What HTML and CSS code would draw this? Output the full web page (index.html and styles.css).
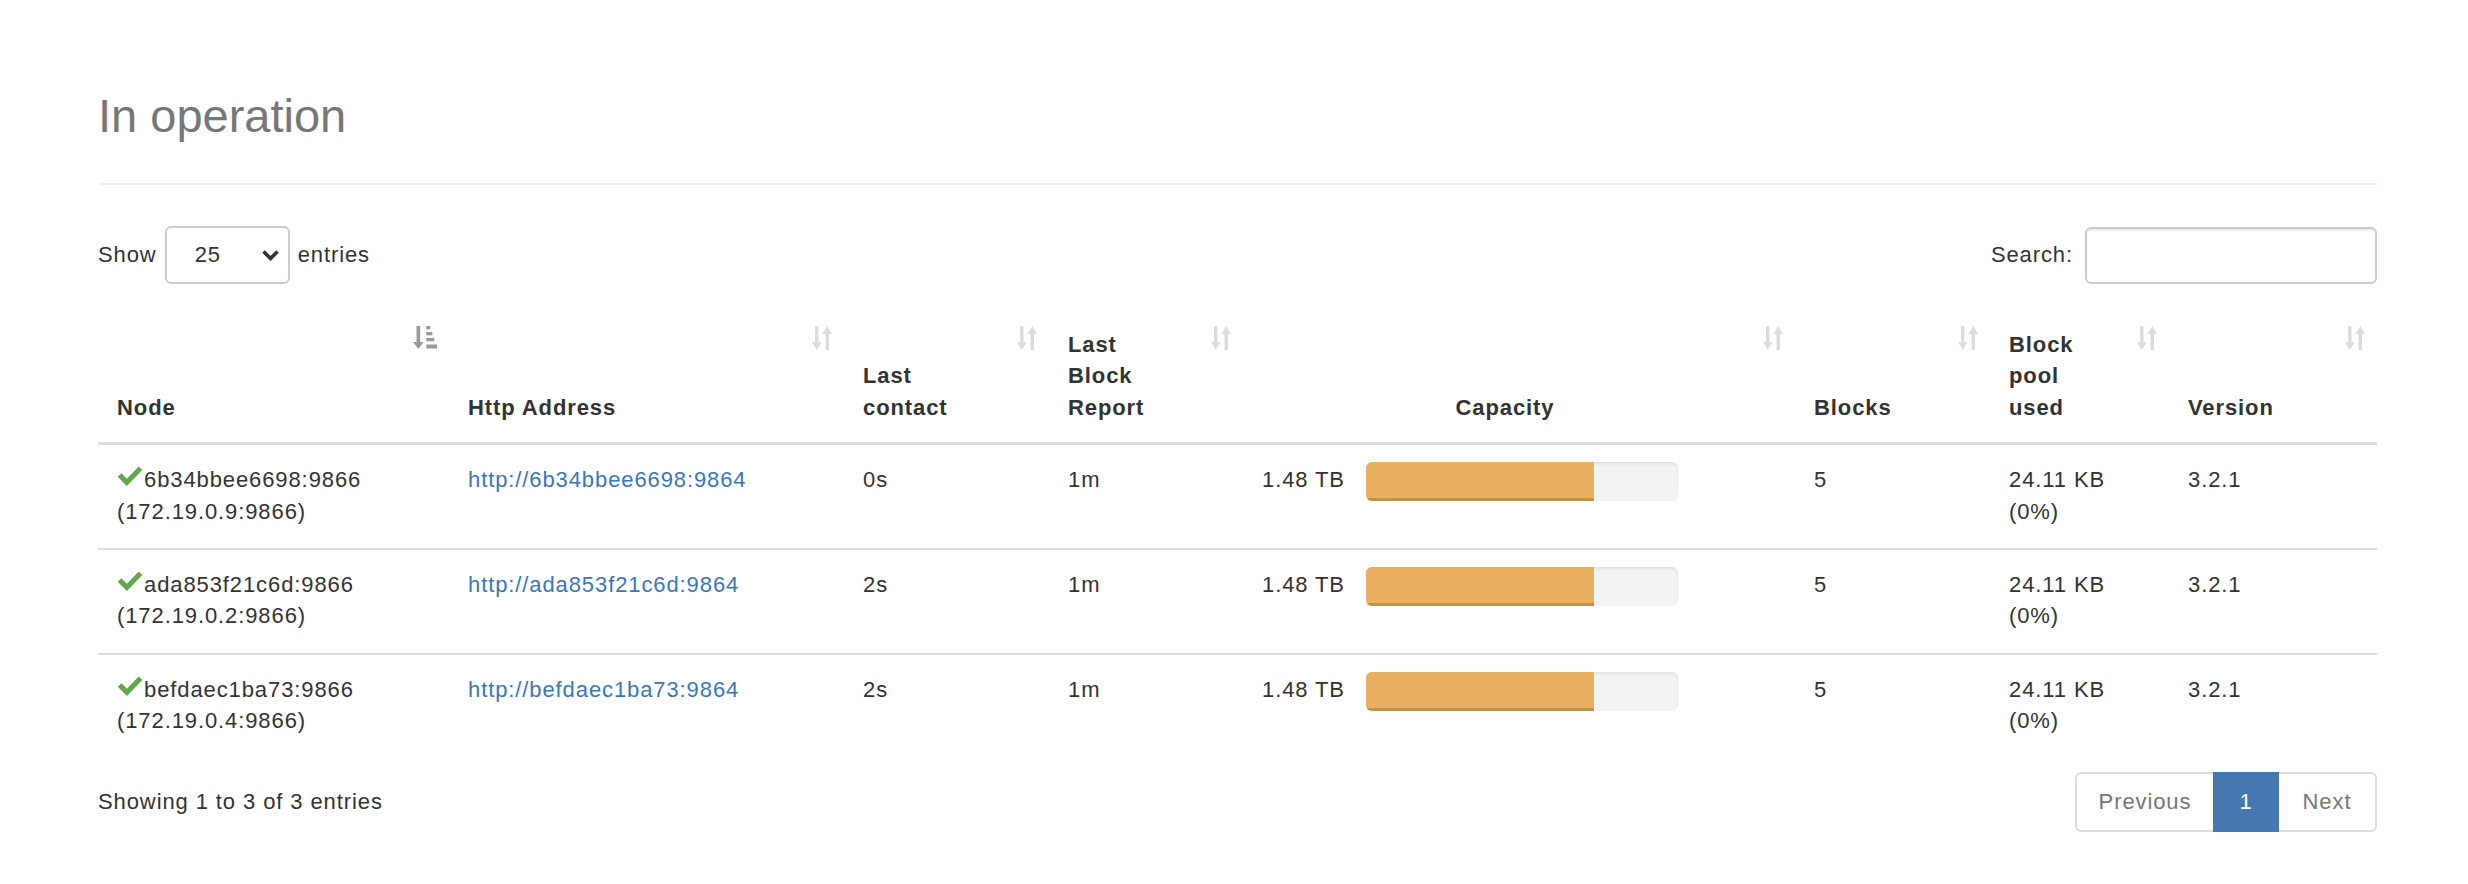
FILE: index.html
```html
<!DOCTYPE html>
<html lang="en">
<head>
<meta charset="utf-8">
<title>In operation</title>
<link rel="stylesheet" href="styles.css">
</head>
<body>
<div class="page">
  <div class="page-header"><h2>In operation</h2></div>

  <div class="controls">
    <label class="length">Show
      <span class="select"><span>25</span>
        <svg class="chevron" width="17" height="12" viewBox="0 0 17 12"><path d="M1.5 2.5 L8.5 9.5 L15.5 2.5" fill="none" stroke="#333" stroke-width="3.6"/></svg>
      </span>
      entries</label>
    <label class="search">Search: <input type="search"></label>
  </div>

  <table class="dt">
    <colgroup>
      <col class="c-node"><col class="c-http"><col class="c-contact"><col class="c-report"><col class="c-cap"><col class="c-blocks"><col class="c-pool"><col class="c-ver">
    </colgroup>
    <thead>
      <tr>
        <th>Node<svg class="sort-icon asc" width="24" height="23" viewBox="0 0 24 23"><rect x="3.5" y="0" width="3.7" height="17"/><polygon points="0,16 10.7,16 5.35,23"/><rect x="13.3" y="0" width="4" height="3.3"/><rect x="13.3" y="6" width="6" height="3.3"/><rect x="13.3" y="12" width="8" height="3.3"/><rect x="13.3" y="18.5" width="10.7" height="4"/></svg></th>
        <th>Http Address<svg class="sort-icon" width="20" height="24" viewBox="0 0 20 24"><rect x="3" y="0" width="3.5" height="17"/><polygon points="0,16 9.5,16 4.75,24"/><polygon points="10.5,8 20,8 15.25,0"/><rect x="13.5" y="7" width="3.5" height="17"/></svg></th>
        <th>Last<br>contact<svg class="sort-icon" width="20" height="24" viewBox="0 0 20 24"><rect x="3" y="0" width="3.5" height="17"/><polygon points="0,16 9.5,16 4.75,24"/><polygon points="10.5,8 20,8 15.25,0"/><rect x="13.5" y="7" width="3.5" height="17"/></svg></th>
        <th>Last<br>Block<br>Report<svg class="sort-icon" width="20" height="24" viewBox="0 0 20 24"><rect x="3" y="0" width="3.5" height="17"/><polygon points="0,16 9.5,16 4.75,24"/><polygon points="10.5,8 20,8 15.25,0"/><rect x="13.5" y="7" width="3.5" height="17"/></svg></th>
        <th class="center">Capacity<svg class="sort-icon" width="20" height="24" viewBox="0 0 20 24"><rect x="3" y="0" width="3.5" height="17"/><polygon points="0,16 9.5,16 4.75,24"/><polygon points="10.5,8 20,8 15.25,0"/><rect x="13.5" y="7" width="3.5" height="17"/></svg></th>
        <th>Blocks<svg class="sort-icon" width="20" height="24" viewBox="0 0 20 24"><rect x="3" y="0" width="3.5" height="17"/><polygon points="0,16 9.5,16 4.75,24"/><polygon points="10.5,8 20,8 15.25,0"/><rect x="13.5" y="7" width="3.5" height="17"/></svg></th>
        <th>Block<br>pool<br>used<svg class="sort-icon" width="20" height="24" viewBox="0 0 20 24"><rect x="3" y="0" width="3.5" height="17"/><polygon points="0,16 9.5,16 4.75,24"/><polygon points="10.5,8 20,8 15.25,0"/><rect x="13.5" y="7" width="3.5" height="17"/></svg></th>
        <th>Version<svg class="sort-icon" width="20" height="24" viewBox="0 0 20 24"><rect x="3" y="0" width="3.5" height="17"/><polygon points="0,16 9.5,16 4.75,24"/><polygon points="10.5,8 20,8 15.25,0"/><rect x="13.5" y="7" width="3.5" height="17"/></svg></th>
      </tr>
    </thead>
    <tbody>
      <tr>
        <td><svg class="ok" width="26" height="23" viewBox="0 0 24 22"><path d="M0.3 12.3 L3.8 8.8 L9 14 L20.3 2.3 L23.8 5.8 L9 21 Z"/></svg>6b34bbee6698:9866<br>(172.19.0.9:9866)</td>
        <td><a href="#">http://6b34bbee6698:9864</a></td>
        <td>0s</td>
        <td>1m</td>
        <td><div class="cap"><span>1.48 TB</span><div class="progress"><div class="progress-bar" style="width:73%"></div></div></div></td>
        <td>5</td>
        <td>24.11 KB<br>(0%)</td>
        <td>3.2.1</td>
      </tr>
      <tr>
        <td><svg class="ok" width="26" height="23" viewBox="0 0 24 22"><path d="M0.3 12.3 L3.8 8.8 L9 14 L20.3 2.3 L23.8 5.8 L9 21 Z"/></svg>ada853f21c6d:9866<br>(172.19.0.2:9866)</td>
        <td><a href="#">http://ada853f21c6d:9864</a></td>
        <td>2s</td>
        <td>1m</td>
        <td><div class="cap"><span>1.48 TB</span><div class="progress"><div class="progress-bar" style="width:73%"></div></div></div></td>
        <td>5</td>
        <td>24.11 KB<br>(0%)</td>
        <td>3.2.1</td>
      </tr>
      <tr>
        <td><svg class="ok" width="26" height="23" viewBox="0 0 24 22"><path d="M0.3 12.3 L3.8 8.8 L9 14 L20.3 2.3 L23.8 5.8 L9 21 Z"/></svg>befdaec1ba73:9866<br>(172.19.0.4:9866)</td>
        <td><a href="#">http://befdaec1ba73:9864</a></td>
        <td>2s</td>
        <td>1m</td>
        <td><div class="cap"><span>1.48 TB</span><div class="progress"><div class="progress-bar" style="width:73%"></div></div></div></td>
        <td>5</td>
        <td>24.11 KB<br>(0%)</td>
        <td>3.2.1</td>
      </tr>
    </tbody>
  </table>

  <div class="footer">
    <div class="info">Showing 1 to 3 of 3 entries</div>
    <ul class="pagination">
      <li class="prev">Previous</li>
      <li class="active">1</li>
      <li class="next">Next</li>
    </ul>
  </div>
</div>
</body>
</html>
```

FILE: styles.css
```css
* { box-sizing: border-box; }

body {
  margin: 0;
  background: #fff;
  color: #333;
  font-family: "Liberation Sans", Arial, Helvetica, sans-serif;
  font-size: 22px;
  line-height: 31.4px;
  letter-spacing: 0.9px;
}

.page {
  padding: 0 91px 0 98px;
}

.page-header {
  padding: 90px 0 41px;
  border-bottom: 2px solid #eee;
}

.page-header h2 {
  margin: 0;
  font-size: 47px;
  line-height: 52px;
  font-weight: 400;
  letter-spacing: 0;
  color: #777;
}

.controls {
  margin-top: 41px;
  height: 58px;
  display: flex;
  justify-content: space-between;
  align-items: center;
}

.length {
  display: flex;
  align-items: center;
  gap: 8px;
}

.select {
  width: 125px;
  height: 58px;
  display: flex;
  align-items: center;
  justify-content: space-between;
  padding: 0 9px 0 28px;
  border: 2px solid #ccc;
  border-radius: 6px;
  background: #fff;
}

.chevron { display: block; }

.search {
  display: flex;
  align-items: center;
  gap: 12px;
}

.search input {
  width: 292px;
  height: 57px;
  padding: 0 19px;
  border: 2px solid #ccc;
  border-radius: 6px;
  box-shadow: inset 0 2px 2px rgba(0, 0, 0, .075);
  font: inherit;
  color: #555;
  outline: none;
}

.dt {
  margin-top: 26px;
  width: 100%;
  border-collapse: collapse;
  table-layout: fixed;
}

.c-node { width: 351px; }
.c-http { width: 395px; }
.c-contact { width: 205px; }
.c-report { width: 194px; }
.c-cap { width: 552px; }
.c-blocks { width: 195px; }
.c-pool { width: 179px; }
.c-ver { width: 208px; }

.dt th {
  position: relative;
  padding: 19px 47px 19px 19px;
  text-align: left;
  vertical-align: bottom;
  font-weight: 700;
  border-bottom: 3px solid #ddd;
}

.dt th.center { text-align: center; }

.sort-icon {
  position: absolute;
  top: 16px;
  right: 12px;
  fill: #dcdcdc;
}

.sort-icon.asc { fill: #9a9a9a; }

.dt td {
  padding: 19px 19px 21px;
  vertical-align: top;
  border-top: 2px solid #ddd;
}

.dt tbody tr:first-child td { border-top: 0; }

.dt a {
  color: #3b77b8;
  text-decoration: none;
}

.ok {
  fill: #62a64d;
  vertical-align: 0;
  margin-right: 1px;
}

.cap {
  display: flex;
  align-items: flex-start;
  gap: 21px;
}

.progress {
  width: 312px;
  height: 39px;
  margin-top: -2px;
  background: #f3f3f3;
  border-radius: 6px;
  overflow: hidden;
  box-shadow: inset 0 2px 3px rgba(0, 0, 0, .08);
}

.progress-bar {
  height: 100%;
  background: #e8b05f;
  box-shadow: inset 0 -3px 0 rgba(0, 0, 0, .16);
}

.footer {
  margin-top: 14px;
  display: flex;
  justify-content: space-between;
  align-items: center;
}

.pagination {
  display: flex;
  margin: 0;
  padding: 0;
  list-style: none;
}

.pagination li {
  height: 60px;
  display: flex;
  align-items: center;
  justify-content: center;
  border: 2px solid #ddd;
  color: #777;
  background: #fff;
}

.pagination li + li { margin-left: -2px; }

.pagination .prev {
  width: 140px;
  border-radius: 6px 0 0 6px;
}

.pagination .active {
  position: relative;
  width: 66px;
  background: #4677b0;
  border-color: #4677b0;
  color: #fff;
}

.pagination .next {
  width: 100px;
  border-radius: 0 6px 6px 0;
}
```
